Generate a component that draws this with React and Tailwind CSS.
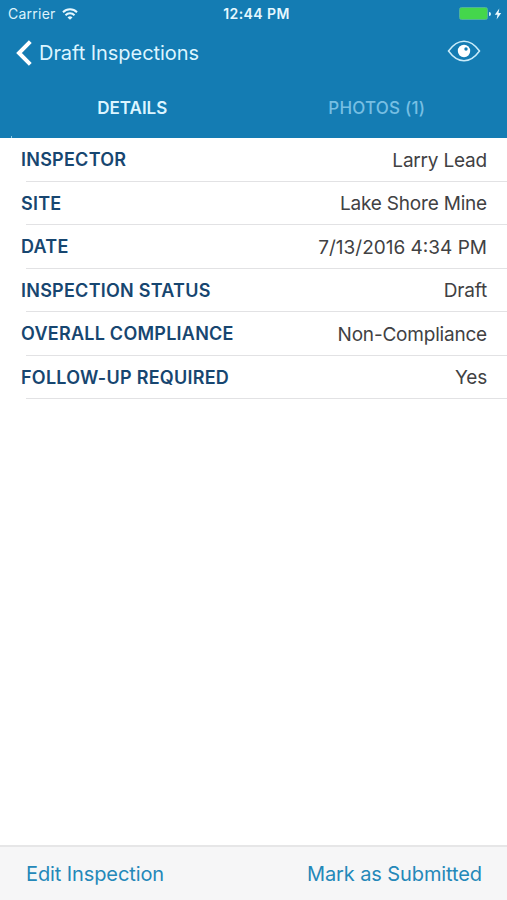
import React from "react";

const rows = [
  { label: "INSPECTOR", value: "Larry Lead" },
  { label: "SITE", value: "Lake Shore Mine" },
  { label: "DATE", value: "7/13/2016 4:34 PM", tracking: "tracking-normal" },
  { label: "INSPECTION STATUS", value: "Draft" },
  { label: "OVERALL COMPLIANCE", value: "Non-Compliance" },
  { label: "FOLLOW-UP REQUIRED", value: "Yes" },
];

function StatusBar() {
  return (
    <div className="grid h-[27px] grid-cols-3 items-center pl-2 pr-[5px] text-[14px] leading-none text-[#dcf3fc]">
      <div className="flex items-center gap-[6px]">
        <span className="tracking-[0.25px]">Carrier</span>
        <svg width="16" height="12" viewBox="0 0 16 12" fill="none" stroke="#e6f8ff" strokeWidth="2">
          <path d="M1 4.2a10 10 0 0 1 14 0" />
          <path d="M3.5 7.2a6.4 6.4 0 0 1 9 0" />
          <path d="M8 11.8 5.5 9.4a3.7 3.7 0 0 1 5 0Z" fill="#e6f8ff" stroke="none" />
        </svg>
      </div>
      <span className="pl-[3px] pt-px text-center font-semibold tracking-[0.4px] text-[#e6f8ff]">12:44 PM</span>
      <div className="flex items-center justify-end">
        <div className="h-[13px] w-[29px] rounded-[2.5px] border border-[#4fb29b] bg-[#44d64c]" />
        <div className="ml-px h-1 w-[2px] rounded-r-full bg-[#d5f2fb]" />
        <svg className="ml-[3px]" width="8" height="12" viewBox="0 0 7 12" fill="#eafaff">
          <path d="M4.8 0.5 0.3 6.8H3L2.1 11.5 6.7 5.1H4Z" />
        </svg>
      </div>
    </div>
  );
}

function Header() {
  return (
    <header className="h-[137.5px] shrink-0 bg-[#147cb3]">
      <StatusBar />
      <div className="flex h-[51px] items-center justify-between pl-4 pr-[26px]">
        <button className="flex items-center gap-[7px] text-[20px] leading-none tracking-[-0.05px] text-[#dcf5ff]">
          <svg width="16" height="26" viewBox="0 0 16 26" fill="none" stroke="#ffffff" strokeWidth="4">
            <path d="M14.3 1.7 3 13l11.3 11.3" />
          </svg>
          <span>Draft Inspections</span>
        </button>
        <button className="-mt-[3px]" aria-label="Preview">
          <svg width="34" height="22" viewBox="0 0 34 22">
            <path d="M1.5 11C11 -2 23 -2 32.5 11C23 24 11 24 1.5 11Z" fill="none" stroke="#c9ecfa" strokeWidth="1.5" />
            <circle cx="17" cy="11" r="6.2" fill="#ffffff" />
            <circle cx="19" cy="9" r="1.7" fill="#147cb3" />
          </svg>
        </button>
      </div>
      <nav className="flex h-[58px] items-center pl-[10px] pr-2 pt-[3px] text-[17px] leading-none">
        <button className="flex-1 text-center font-semibold text-[#dcf5ff]">DETAILS</button>
        <button className="flex-1 text-center font-medium tracking-[0.2px] text-[#77bfe3]">PHOTOS (1)</button>
      </nav>
      <div className="ml-[11px] h-[1.5px] w-px bg-[#8cc8e4]" />
    </header>
  );
}

export default function App() {
  return (
    <div className="flex h-[900px] w-[507px] flex-col overflow-hidden bg-white font-['Inter',sans-serif]">
      <Header />
      <main className="flex-1">
        {rows.map((row) => (
          <div key={row.label} className="h-[43.6px]">
            <div className="flex h-[43px] items-center justify-between pl-[21px] pr-5 pt-[2px] text-[18px] leading-none">
              <span className="font-semibold tracking-[0.25px] text-[#174670]">{row.label}</span>
              <span className={`text-[19px] text-[#414143] ${row.tracking || "tracking-[-0.2px]"}`}>{row.value}</span>
            </div>
            <div className="ml-[26px] h-px bg-[#e2e2e4]" />
          </div>
        ))}
      </main>
      <footer className="flex h-[55px] shrink-0 items-center justify-between border-t-2 border-[#e6e6e7] bg-[#f6f6f7] pl-[26px] pr-[25px] text-[20px] leading-none tracking-[-0.1px] text-[#2488b9]">
        <button>Edit Inspection</button>
        <button>Mark as Submitted</button>
      </footer>
    </div>
  );
}
